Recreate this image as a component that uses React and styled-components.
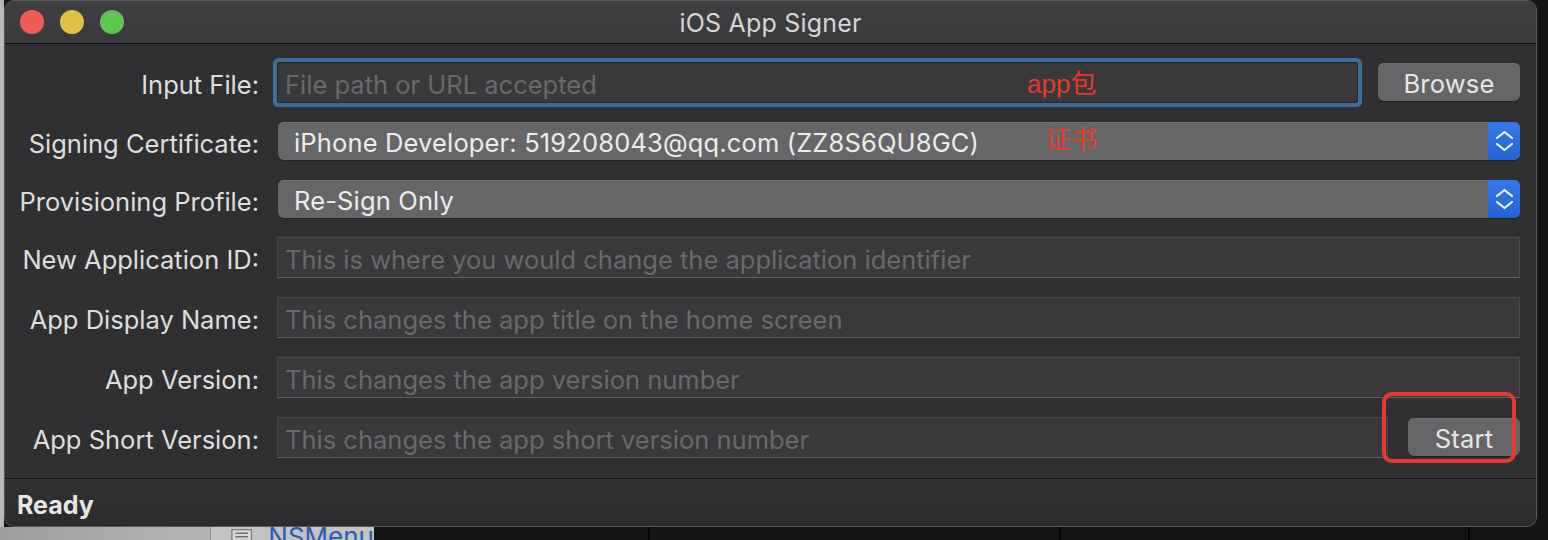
import React from "react";
import styled, { createGlobalStyle } from "styled-components";

const GlobalStyle = createGlobalStyle`
  html, body {
    margin: 0;
    padding: 0;
    background: #141416;
  }
  body {
    font-family: Inter, "Noto Sans", "Liberation Sans", sans-serif;
    -webkit-font-smoothing: antialiased;
  }
  * {
    box-sizing: border-box;
  }
`;

const Desktop = styled.div`
  position: relative;
  width: 1548px;
  height: 540px;
  overflow: hidden;
  display: flex;
  flex-direction: column;
  background: linear-gradient(to right, #bebebe 0, #b2b2b2 4px, #141416 4px);
`;

const Window = styled.div`
  margin-left: 4px;
  width: 1533px;
  height: 527px;
  flex: none;
  display: flex;
  flex-direction: column;
  background: #303032;
  border: 1px solid #59595b;
  border-radius: 10px;
  overflow: hidden;
`;

const TitleBar = styled.div`
  height: 43px;
  flex: none;
  display: grid;
  grid-template-columns: 1fr auto 1fr;
  align-items: center;
  background: linear-gradient(#3f3f41, #3a3a3c);
  border-bottom: 1px solid #0d0d0d;
`;

const Lights = styled.div`
  display: flex;
  gap: 16px;
  padding-left: 15px;
`;

const Light = styled.span`
  width: 24px;
  height: 24px;
  border-radius: 50%;
  background: ${(p) => p.$color};
`;

const Title = styled.div`
  font-size: 25px;
  color: #d6d6d6;
  letter-spacing: 0.2px;
  padding-top: 1px;
`;

const Content = styled.div`
  flex: 1;
  display: flex;
  flex-direction: column;
  padding: 8px 16px 0 0;
`;

const Row = styled.div`
  height: ${(p) => p.$h}px;
  flex: none;
  display: grid;
  grid-template-columns: 254px 1fr;
  column-gap: 18px;
  align-items: center;
`;

const Label = styled.div`
  text-align: right;
  padding-top: 4px;
  font-size: 25.5px;
  color: #dedede;
  white-space: nowrap;
`;

const Controls = styled.div`
  display: flex;
  align-items: center;
  gap: 20px;
`;

const TextField = styled.input`
  flex: 1;
  min-width: 0;
  height: 41px;
  padding: 4px 0 0 7px;
  margin: 0;
  font-family: Inter, "Noto Sans", "Liberation Sans", sans-serif;
  font-size: 25.5px;
  color: #e0e0e0;
  background: #39393b;
  border: 1px solid #4a4a4c;
  border-bottom-color: #5f5f61;
  outline: none;

  &::placeholder {
    color: #69696b;
  }
`;

const FocusField = styled(TextField)`
  border: 1px solid #27272a;
  border-radius: 2px;
  box-shadow: 0 0 0 4px #3e6d9b;
`;

const Button = styled.button`
  flex: none;
  width: ${(p) => p.$w}px;
  height: 38px;
  margin: 0;
  padding: 3px 0 0;
  font-family: Inter, "Noto Sans", "Liberation Sans", sans-serif;
  font-size: 25.5px;
  color: #e6e6e6;
  background: #656567;
  border: none;
  border-radius: 6px;
  box-shadow: inset 0 1px 0 #717173, 0 1px 1px rgba(0, 0, 0, 0.35);
  letter-spacing: 0.2px;
`;

const Popup = styled.div`
  height: 38px;
  margin-left: 1px;
  display: flex;
  align-items: stretch;
  background: #666668;
  border-radius: 6px;
  box-shadow: inset 0 1px 0 #727274, 0 1px 1px rgba(0, 0, 0, 0.35);
  overflow: hidden;
`;

const PopupText = styled.div`
  flex: 1;
  display: flex;
  align-items: center;
  padding: 3px 0 0 16px;
  font-size: 25.5px;
  color: #ececec;
  letter-spacing: 0.15px;
`;

const Stepper = styled.div`
  width: 32px;
  flex: none;
  display: flex;
  align-items: center;
  justify-content: center;
  background: linear-gradient(#3479ec, #2462d6);
`;

const StatusBar = styled.div`
  height: 48px;
  flex: none;
  display: flex;
  align-items: center;
  padding: 5px 0 0 12px;
  background: linear-gradient(#313133, #2b2b2d);
  border-top: 1px solid #121212;
  font-size: 25px;
  font-weight: 700;
  color: #e6e6e6;
`;

const Dock = styled.div`
  height: 13px;
  flex: none;
  display: flex;
  overflow: hidden;
`;

const DockCell = styled.div`
  width: ${(p) => p.$w}px;
  flex: none;
  background: ${(p) => p.$bg || "#141416"};
  border-left: ${(p) => (p.$line ? "2px solid #040404" : "none")};
`;

const FinderItem = styled.div`
  width: 164px;
  flex: none;
  display: flex;
  align-items: flex-start;
  gap: 16px;
  padding: 1px 0 0 20px;
  background: #c3c3c3;
  border-left: 1px solid #8f8f8f;
  overflow: hidden;
`;

const FinderName = styled.span`
  margin-top: -4px;
  font-size: 26px;
  line-height: 26px;
  color: #2a5db2;
  white-space: nowrap;
`;

const Note = styled.div`
  position: absolute;
  left: ${(p) => p.$x}px;
  top: ${(p) => p.$y}px;
  font-family: "Liberation Sans", "Noto Sans CJK SC", sans-serif;
  font-size: 26px;
  line-height: 30px;
  color: #e63b2b;
  pointer-events: none;
`;

const Highlight = styled.div`
  position: absolute;
  left: 1382px;
  top: 392px;
  width: 134px;
  height: 71px;
  border: 4px solid #e4392b;
  border-radius: 10px;
  pointer-events: none;
`;

const Chevrons = () => (
  <svg width="32" height="38" viewBox="0 0 32 38">
    <path
      d="M9 16 L16.5 10 L24 16 M9 22 L16.5 28 L24 22"
      fill="none"
      stroke="#f2f5fb"
      strokeWidth="2.2"
      strokeLinecap="round"
      strokeLinejoin="round"
    />
  </svg>
);

const ListIcon = () => (
  <svg width="24" height="14" viewBox="0 0 24 14">
    <rect x="1" y="1" width="22" height="20" fill="#d8d8d8" stroke="#7d7d7d" strokeWidth="1.5" />
    <path d="M5 5 H19 M5 9 H19 M5 13 H19" stroke="#6f6f6f" strokeWidth="1.5" />
  </svg>
);

const Select = ({ value }) => (
  <Popup>
    <PopupText>{value}</PopupText>
    <Stepper>
      <Chevrons />
    </Stepper>
  </Popup>
);

export default function App() {
  return (
    <>
      <GlobalStyle />
      <Desktop>
        <Window>
          <TitleBar>
            <Lights>
              <Light $color="#ee5e57" />
              <Light $color="#e2bf45" />
              <Light $color="#62c453" />
            </Lights>
            <Title>iOS App Signer</Title>
            <div />
          </TitleBar>

          <Content>
            <Row $h={60}>
              <Label>Input File:</Label>
              <Controls>
                <FocusField placeholder="File path or URL accepted" readOnly />
                <Button $w={142}>Browse</Button>
              </Controls>
            </Row>
            <Row $h={58}>
              <Label>Signing Certificate:</Label>
              <Select value="iPhone Developer: 519208043@qq.com (ZZ8S6QU8GC)" />
            </Row>
            <Row $h={58}>
              <Label>Provisioning Profile:</Label>
              <Select value="Re-Sign Only" />
            </Row>
            <Row $h={59}>
              <Label>New Application ID:</Label>
              <Controls>
                <TextField placeholder="This is where you would change the application identifier" readOnly />
              </Controls>
            </Row>
            <Row $h={60}>
              <Label>App Display Name:</Label>
              <Controls>
                <TextField placeholder="This changes the app title on the home screen" readOnly />
              </Controls>
            </Row>
            <Row $h={60}>
              <Label>App Version:</Label>
              <Controls>
                <TextField placeholder="This changes the app version number" readOnly />
              </Controls>
            </Row>
            <Row $h={60}>
              <Label>App Short Version:</Label>
              <Controls>
                <TextField placeholder="This changes the app short version number" readOnly />
                <Button $w={112}>Start</Button>
              </Controls>
            </Row>
          </Content>

          <StatusBar>Ready</StatusBar>
        </Window>

        <Dock>
          <DockCell $w={210} $bg="linear-gradient(to right, #9d9d9d, #b6b6b6)" />
          <FinderItem>
            <ListIcon />
            <FinderName>NSMenu</FinderName>
          </FinderItem>
          <DockCell $w={274} />
          <DockCell $w={411} $line />
          <DockCell $w={409} $line />
          <DockCell $w={80} $line />
        </Dock>

        <Note $x={1027} $y={69}>app包</Note>
        <Note $x={1045} $y={125}>证书</Note>
        <Highlight />
      </Desktop>
    </>
  );
}
